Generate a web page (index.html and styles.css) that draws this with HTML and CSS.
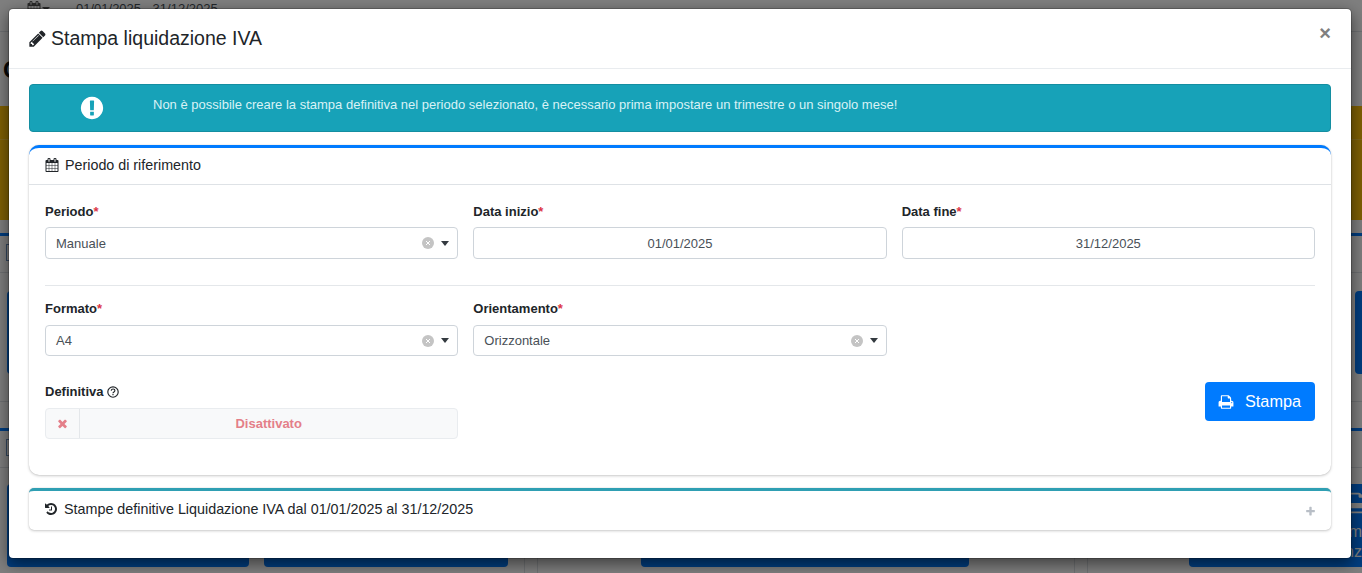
FILE: index.html
```html
<!DOCTYPE html>
<html lang="it">
<head>
<meta charset="utf-8">
<title>Stampa liquidazione IVA</title>
<link rel="stylesheet" href="styles.css">
</head>
<body>
<div class="page">
  <div class="topbar">
    <svg class="bg-cal" viewBox="0 0 1792 1792"><path d="M192 1664h288v-288h-288v288zm352 0h320v-288h-320v288zm-352-352h288v-320h-288v320zm352 0h320v-320h-320v320zm-352-384h288v-288h-288v288zm736 736h320v-288h-320v288zm-384-736h320v-288h-320v288zm768 736h288v-288h-288v288zm-384-352h320v-320h-320v320zm-352-864v-288q0-13-9.5-22.5t-22.5-9.5h-64q-13 0-22.5 9.5t-9.5 22.5v288q0 13 9.5 22.5t22.5 9.5h64q13 0 22.5-9.5t9.5-22.5zm736 864h288v-320h-288v320zm-384-384h320v-288h-320v288zm384 0h288v-288h-288v288zm32-480v-288q0-13-9.5-22.5t-22.5-9.5h-64q-13 0-22.5 9.5t-9.5 22.5v288q0 13 9.5 22.5t22.5 9.5h64q13 0 22.5-9.5t9.5-22.5zm384-64v1280q0 52-38 90t-90 38h-1408q-52 0-90-38t-38-90v-1280q0-52 38-90t90-38h128v-96q0-66 47-113t113-47h64q66 0 113 47t47 113v96h384v-96q0-66 47-113t113-47h64q66 0 113 47t47 113v96h128q52 0 90 38t38 90z"/></svg>
    <span class="bg-caret"></span>
    <span class="bg-date">01/01/2025 - 31/12/2025</span>
  </div>
  <div class="bg-head">C</div>
  <div class="bg-gold"><div class="bg-gold-head"></div></div>
  <section class="bg-panel first">
    <div class="bg-panel-head"><span class="bg-box"></span></div>
    <div class="bg-actions">
      <span class="bg-btn left"></span>
      <span class="bg-btn edge"></span>
    </div>
  </section>
  <section class="bg-panel second">
    <div class="bg-panel-head"><span class="bg-box"></span></div>
    <div class="bg-cols">
      <div class="bg-col one"><span class="bg-btn wide-a"></span><span class="bg-btn wide-b"></span></div>
      <div class="bg-col two"><span class="bg-btn wide-c"></span></div>
      <div class="bg-col three">
        <span class="bg-btn wide-d">
          <svg class="bg-print" viewBox="0 0 1792 1792"><path d="M448 1536h896v-256h-896v256zm0-640h896v-384h-160q-40 0-68-28t-28-68v-160h-640v640zm1152 64q0-26-19-45t-45-19-45 19-19 45 19 45 45 19 45-19 19-45zm128 0v416q0 13-9.5 22.5t-22.5 9.5h-224v160q0 40-28 68t-68 28h-960q-40 0-68-28t-28-68v-160h-224q-13 0-22.5-9.5t-9.5-22.5v-416q0-79 56.5-135.5t135.5-56.5h64v-544q0-40 28-68t68-28h672q40 0 88 20t76 48l152 152q28 28 48 76t20 88v256h64q79 0 135.5 56.5t56.5 135.5z"/></svg>
          <span class="bg-btn-line">Riepilogo com</span>
          <span class="bg-btn-line">Scadenz</span>
        </span>
      </div>
    </div>
  </section>
</div>
<div class="overlay"></div>

<div class="modal">
  <header class="modal-header">
    <h5 class="modal-title">
      <svg class="icon-title" viewBox="0 0 1792 1792"><path d="M491 1536l91-91-235-235-91 91v107h128v128h107zm523-928q0-22-22-22-10 0-17 7l-542 542q-7 7-7 17 0 22 22 22 10 0 17-7l542-542q7-7 7-17zm-54-192l416 416-832 832h-416v-416zm683 96q0 53-37 90l-166 166-416-416 166-165q36-38 90-38 53 0 91 38l235 234q37 39 37 91z"/></svg>
      Stampa liquidazione IVA
    </h5>
    <span class="close">×</span>
  </header>
  <div class="modal-body">
    <div class="alert">
      <div class="alert-icon">
        <svg viewBox="0 0 1792 1792"><path d="M896 128q209 0 385.5 103t279.5 279.5 103 385.5-103 385.5-279.5 279.5-385.5 103-385.5-103-279.5-279.5-103-385.5 103-385.5 279.5-279.5 385.5-103zm128 1247v-190q0-14-9-23.5t-22-9.5h-192q-13 0-23 10t-10 23v190q0 13 10 23t23 10h192q13 0 22-9.5t9-23.5zm-2-344l18-621q0-12-10-18-10-8-24-8h-220q-14 0-24 8-10 6-10 18l17 621q0 10 10 17.5t24 7.5h185q14 0 23.5-7.5t10.5-17.5z"/></svg>
      </div>
      <div class="alert-text">Non è possibile creare la stampa definitiva nel periodo selezionato, è necessario prima impostare un trimestre o un singolo mese!</div>
    </div>

    <section class="card card-primary">
      <div class="card-header">
        <svg class="icon-cal" viewBox="0 0 1792 1792"><path d="M192 1664h288v-288h-288v288zm352 0h320v-288h-320v288zm-352-352h288v-320h-288v320zm352 0h320v-320h-320v320zm-352-384h288v-288h-288v288zm736 736h320v-288h-320v288zm-384-736h320v-288h-320v288zm768 736h288v-288h-288v288zm-384-352h320v-320h-320v320zm-352-864v-288q0-13-9.5-22.5t-22.5-9.5h-64q-13 0-22.5 9.5t-9.5 22.5v288q0 13 9.5 22.5t22.5 9.5h64q13 0 22.5-9.5t9.5-22.5zm736 864h288v-320h-288v320zm-384-384h320v-288h-320v288zm384 0h288v-288h-288v288zm32-480v-288q0-13-9.5-22.5t-22.5-9.5h-64q-13 0-22.5 9.5t-9.5 22.5v288q0 13 9.5 22.5t22.5 9.5h64q13 0 22.5-9.5t9.5-22.5zm384-64v1280q0 52-38 90t-90 38h-1408q-52 0-90-38t-38-90v-1280q0-52 38-90t90-38h128v-96q0-66 47-113t113-47h64q66 0 113 47t47 113v96h384v-96q0-66 47-113t113-47h64q66 0 113 47t47 113v96h128q52 0 90 38t38 90z"/></svg>
        <span>Periodo di riferimento</span>
      </div>
      <div class="card-body">
        <div class="form-row">
          <div class="field">
            <label class="field-label first-label">Periodo<span class="req">*</span></label>
            <div class="select tall">
              <span class="select-value">Manuale</span>
              <span class="select-clear"><svg viewBox="0 0 12 12"><path d="M4 4l4 4M8 4l-4 4"/></svg></span>
              <span class="select-caret"></span>
            </div>
          </div>
          <div class="field">
            <label class="field-label first-label">Data inizio<span class="req">*</span></label>
            <div class="date-input">01/01/2025</div>
          </div>
          <div class="field">
            <label class="field-label first-label">Data fine<span class="req">*</span></label>
            <div class="date-input">31/12/2025</div>
          </div>
        </div>
        <hr class="divider">
        <div class="form-row">
          <div class="field">
            <label class="field-label">Formato<span class="req">*</span></label>
            <div class="select">
              <span class="select-value">A4</span>
              <span class="select-clear"><svg viewBox="0 0 12 12"><path d="M4 4l4 4M8 4l-4 4"/></svg></span>
              <span class="select-caret"></span>
            </div>
          </div>
          <div class="field">
            <label class="field-label">Orientamento<span class="req">*</span></label>
            <div class="select">
              <span class="select-value">Orizzontale</span>
              <span class="select-clear"><svg viewBox="0 0 12 12"><path d="M4 4l4 4M8 4l-4 4"/></svg></span>
              <span class="select-caret"></span>
            </div>
          </div>
        </div>
        <div class="form-row last">
          <div class="field">
            <label class="field-label">Definitiva
              <svg class="icon-help" viewBox="0 0 12 12"><circle cx="6" cy="6" r="5.2"/><path d="M4.2 4.7c.1-1 .9-1.7 1.9-1.7s1.8.7 1.8 1.6c0 1.4-1.9 1.3-1.9 2.7"/><path d="M6 8.1v1.2"/></svg>
            </label>
            <div class="toggle">
              <span class="toggle-icon"><svg viewBox="0 0 1792 1792"><path d="M1490 1322q0 40-28 68l-136 136q-28 28-68 28t-68-28l-294-294-294 294q-28 28-68 28t-68-28l-136-136q-28-28-28-68t28-68l294-294-294-294q-28-28-28-68t28-68l136-136q28-28 68-28t68 28l294 294 294-294q28-28 68-28t68 28l136 136q28 28 28 68t-28 68l-294 294 294 294q28 28 28 68z"/></svg></span>
              <span class="toggle-text">Disattivato</span>
            </div>
          </div>
          <div class="field-spacer"></div>
          <div class="field-action">
            <button class="btn-print" type="button">
              <svg viewBox="0 0 1792 1792"><path d="M448 1536h896v-256h-896v256zm0-640h896v-384h-160q-40 0-68-28t-28-68v-160h-640v640zm1152 64q0-26-19-45t-45-19-45 19-19 45 19 45 45 19 45-19 19-45zm128 0v416q0 13-9.5 22.5t-22.5 9.5h-224v160q0 40-28 68t-68 28h-960q-40 0-68-28t-28-68v-160h-224q-13 0-22.5-9.5t-9.5-22.5v-416q0-79 56.5-135.5t135.5-56.5h64v-544q0-40 28-68t68-28h672q40 0 88 20t76 48l152 152q28 28 48 76t20 88v256h64q79 0 135.5 56.5t56.5 135.5z"/></svg>
              <span>Stampa</span>
            </button>
          </div>
        </div>
      </div>
    </section>

    <section class="card card-info">
      <div class="card-header-collapsed">
        <svg class="icon-history" viewBox="0 0 1792 1792"><path d="M1664 896q0 156-61 298t-164 245-245 164-298 61q-172 0-327-72.5t-264-204.5q-7-10-6.5-22.5t8.5-20.5l137-138q10-9 25-9 16 2 23 12 73 95 179 147t225 52q104 0 198.5-40.5t163.5-109.5 109.5-163.5 40.5-198.5-40.5-198.5-109.5-163.5-163.5-109.5-198.5-40.5q-98 0-188 35.5t-160 101.5l137 138q31 30 14 69-17 40-59 40h-448q-26 0-45-19t-19-45v-448q0-42 40-59 39-17 69 14l130 129q107-101 244.5-156.5t284.5-55.5q156 0 298 61t245 164 164 245 61 298zm-640-288v448q0 14-9 23t-23 9h-320q-14 0-23-9t-9-23v-64q0-14 9-23t23-9h224v-352q0-14 9-23t23-9h64q14 0 23 9t9 23z"/></svg>
        <span class="collapsed-title">Stampe definitive Liquidazione IVA dal 01/01/2025 al 31/12/2025</span>
        <svg class="icon-plus" viewBox="0 0 1792 1792"><path d="M1600 736v192q0 40-28 68t-68 28h-416v416q0 40-28 68t-68 28h-192q-40 0-68-28t-28-68v-416h-416q-40 0-68-28t-28-68v-192q0-40 28-68t68-28h416v-416q0-40 28-68t68-28h192q40 0 68 28t28 68v416h416q40 0 68 28t28 68z"/></svg>
      </div>
    </section>
  </div>
</div>
</body>
</html>
```

FILE: styles.css
```css
* { box-sizing: border-box; }
html, body { margin: 0; padding: 0; height: 573px; overflow: hidden; }
body { font-family: "Liberation Sans", Arial, sans-serif; font-size: 13px; color: #212529; background: #f4f6f9; position: relative; }

/* page behind the dialog */
.page { width: 1362px; height: 573px; overflow: hidden; background: #fff; }
.topbar { height: 32px; border-bottom: 1px solid #dee2e6; display: flex; align-items: flex-start; padding: 1px 0 0 27px; color: #495057; }
.bg-cal { width: 14px; height: 14px; fill: #555; }
.bg-caret { width: 0; height: 0; margin: 6px 0 0 1px; border: 4px solid transparent; border-top-color: #555; border-bottom: 0; }
.bg-date { margin-left: 26px; line-height: 15px; }
.bg-head { height: 74px; padding: 24px 0 0 3px; font-size: 24px; line-height: 28px; font-weight: 700; color: #111; }
.bg-gold { height: 114px; background: #ffc107; }
.bg-gold-head { height: 34px; border-bottom: 1px solid rgba(255,255,255,.2); }
.bg-panel { border-top: 3px solid #007bff; }
.bg-panel.first { margin-top: 13px; height: 169px; border-bottom: 1px solid #dee2e6; }
.bg-panel.second { margin-top: 26px; }
.bg-panel-head { height: 37px; border-bottom: 1px solid #dee2e6; padding: 8px 0 0 6px; }
.bg-box { display: block; width: 16px; height: 17px; border: 1px solid #6a8fbf; }
.bg-actions { display: flex; justify-content: space-between; padding: 18px 0 0 7px; }
.bg-btn { display: block; flex: none; background: #007bff; border-radius: 4px; height: 83px; }
.bg-btn.left { width: 243px; }
.bg-btn.edge { width: 7px; border-radius: 4px 0 0 4px; }
.bg-cols { display: grid; grid-template-columns: 525px 550px 287px; height: 120px; }
.bg-col { padding-top: 16px; display: flex; height: 105px; }
.bg-col.one { padding-left: 7px; gap: 15px; border-right: 1px solid #dee2e6; }
.bg-col.two { margin-left: 12px; padding-left: 103px; border-left: 1px solid #dee2e6; border-right: 1px solid #dee2e6; }
.bg-col.three { margin-left: 12px; padding-left: 101px; border-left: 1px solid #dee2e6; }
.bg-btn.wide-a { width: 242px; }
.bg-btn.wide-b { width: 244px; }
.bg-btn.wide-c { width: 328px; }
.bg-btn.wide-d { width: 173px; border-radius: 4px 0 0 4px; color: #fff; text-align: right; padding-top: 7px; overflow: hidden; }
.bg-print { display: block; width: 24px; height: 24px; fill: #fff; margin: 0 -6px 7px auto; }
.bg-btn-line { display: block; font-size: 16px; line-height: 20px; white-space: nowrap; }
.overlay { position: absolute; inset: 0; background: rgba(0,0,0,.5); }

/* dialog */
.modal { position: absolute; left: 8px; top: 8px; width: 1344px; height: 551px; background: #fff; border: 1px solid rgba(0,0,0,.2); border-radius: 5px; box-shadow: 0 5px 15px rgba(0,0,0,.5); background-clip: padding-box; }
.modal-header { height: 60px; border-bottom: 1px solid #e9ecef; display: flex; align-items: center; justify-content: space-between; padding: 0 20px; }
.modal-title { margin: 0 0 1px; font-size: 19.5px; font-weight: 400; line-height: 30px; display: flex; align-items: center; gap: 4px; }
.icon-title { width: 19px; height: 19px; fill: #212529; margin-left: -1px; }
.close { font-size: 20px; font-weight: 700; line-height: 1; color: #808080; margin: -11px 0 0 0; }
.modal-body { padding: 15px 20px; }

.alert { height: 48px; background: #17a2b8; border: 1px solid #148ea1; border-radius: 4px; display: flex; color: #d9f2f6; margin-bottom: 13px; }
.alert-icon { width: 123px; flex: none; display: flex; justify-content: center; padding: 9px 0 0 1px; }
.alert-icon svg { width: 26px; height: 26px; fill: #fff; margin-top: 1px; }
.alert-text { padding-top: 10px; line-height: 19px; }

.card { background: #fff; border-radius: 10px; box-shadow: 0 0 1px rgba(0,0,0,.2), 0 1px 3px rgba(0,0,0,.2); }
.card-primary { height: 330px; border-top: 3px solid #007bff; margin-bottom: 13px; }
.card-header { height: 37px; border-bottom: 1px solid #dee2e6; padding: 0 16px 3px; display: flex; align-items: center; gap: 6px; font-size: 14.3px; }
.icon-cal { width: 14px; height: 14px; fill: #212529; }
.card-body { padding: 16px 16px 0; }
.form-row { display: grid; grid-template-columns: repeat(3, 1fr); column-gap: 15px; }
.form-row.last { margin-top: 26px; }
.field-label { display: block; font-weight: 700; line-height: 19px; margin-bottom: 7px; }
.first-label { padding-top: 1px; margin-bottom: 6px; }
.req { color: #dc3545; }
.icon-help { width: 12px; height: 12px; fill: none; stroke: #212529; stroke-width: 1.15; vertical-align: -2px; }

.select { height: 31px; border: 1px solid #ced4da; border-radius: 4px; display: flex; align-items: center; padding: 0 8px 0 10px; color: #495057; }
.select.tall { height: 32px; }
.select-value { flex: 1; }
.select-clear { width: 12px; height: 12px; border-radius: 50%; background: #c4c4c4; margin-right: 7px; display: flex; }
.select-clear svg { width: 12px; height: 12px; fill: none; stroke: #fff; stroke-width: 1; }
.select-caret { width: 0; height: 0; border: 4px solid transparent; border-top: 5px solid #343a40; border-bottom: 0; }
.date-input { height: 32px; border: 1px solid #ced4da; border-radius: 4px; text-align: center; line-height: 31px; color: #495057; }
.divider { border: 0; border-top: 1px solid #e4e7ea; margin: 26px 0 13px; }

.toggle { height: 31px; background: #f8f9fa; border: 1px solid #e9ecef; border-radius: 4px; display: flex; align-items: center; }
.toggle-icon { width: 34px; height: 100%; border-right: 1px solid #e4e7ea; display: flex; align-items: center; justify-content: center; }
.toggle-icon svg { width: 13px; height: 13px; fill: #e47f89; }
.toggle-text { flex: 1; text-align: center; font-weight: 700; color: #e47f89; }
.field-action { display: flex; justify-content: flex-end; align-items: flex-start; }
.btn-print { width: 110px; height: 39px; background: #007bff; border: 0; border-radius: 4px; color: #fff; font-family: inherit; font-size: 16.25px; display: flex; align-items: center; justify-content: center; gap: 11px; padding: 0 1px 0 0; }
.btn-print svg { width: 16px; height: 16px; fill: #fff; }

.card-info { height: 42px; border-top: 3px solid #2f9fb3; border-radius: 5px; }
.card-header-collapsed { height: 39px; padding: 0 16px 4px; display: flex; align-items: center; font-size: 14.33px; gap: 6px; }
.collapsed-title { flex: 1; }
.icon-history { width: 14px; height: 14px; fill: #212529; margin-left: -1px; }
.icon-plus { width: 11px; height: 11px; fill: #b8bec6; margin: 6px -1px 0 0; }
```
